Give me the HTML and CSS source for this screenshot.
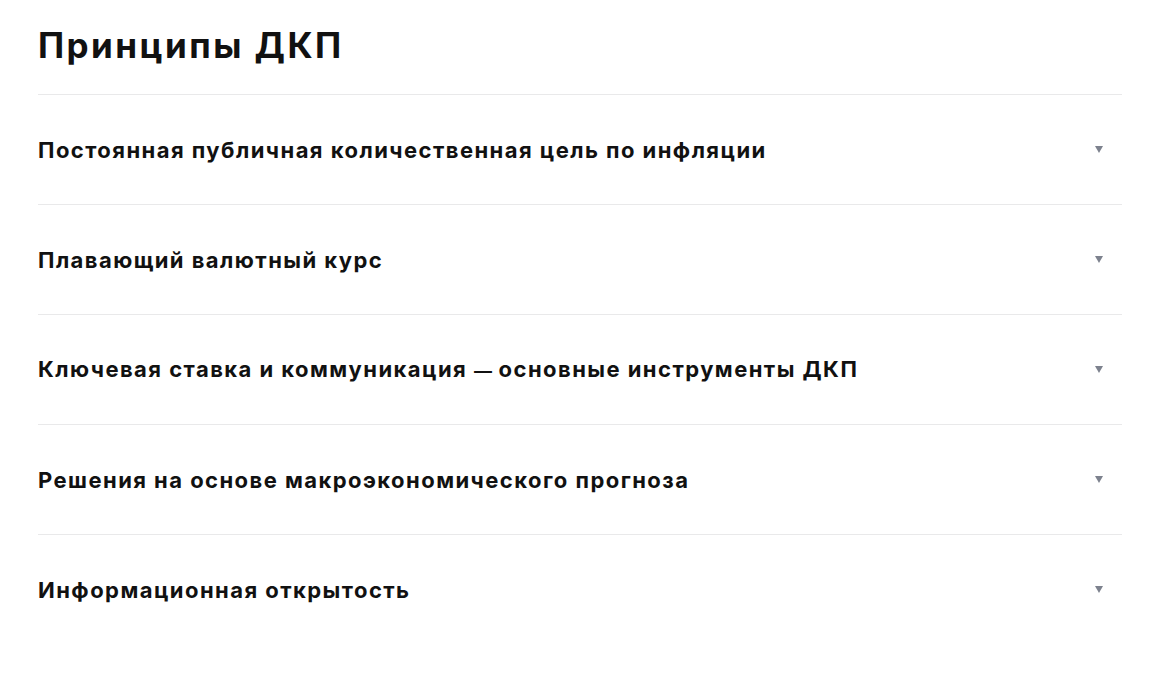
FILE: index.html
```html
<!DOCTYPE html>
<html lang="ru">
<head>
<meta charset="utf-8">
<link rel="stylesheet" href="styles.css">
</head>
<body>
<section class="principles">
  <h1 class="title">Принципы ДКП</h1>
  <div class="list">
    <div class="item"><span class="item-text">Постоянная публичная количественная цель по инфляции</span><span class="arrow"></span></div>
    <div class="item"><span class="item-text">Плавающий валютный курс</span><span class="arrow"></span></div>
    <div class="item"><span class="item-text">Ключевая ставка и коммуникация <span class="dash">—</span> основные инструменты ДКП</span><span class="arrow"></span></div>
    <div class="item"><span class="item-text">Решения на основе макроэкономического прогноза</span><span class="arrow"></span></div>
    <div class="item"><span class="item-text">Информационная открытость</span><span class="arrow"></span></div>
  </div>
</section>
</body>
</html>
```
FILE: styles.css
```css
html, body {
  margin: 0;
  padding: 0;
  background: #ffffff;
}
body {
  font-family: Inter, "Noto Sans", "DejaVu Sans", sans-serif;
  color: #111111;
}
.principles {
  width: 1084px;
  padding: 23px 0 0 38px;
}
.title {
  margin: 0;
  font-size: 35px;
  line-height: 44px;
  font-weight: 700;
  letter-spacing: 2.45px;
}
.list {
  margin-top: 27px;
}
.item {
  display: flex;
  align-items: center;
  justify-content: space-between;
  height: 110px;
  box-sizing: border-box;
  border-top: 1px solid #e9e9ea;
}
.item-text {
  font-size: 22px;
  line-height: 28px;
  font-weight: 700;
  letter-spacing: 1.45px;
}
.dash {
  font-size: 18px;
  letter-spacing: 0;
}
.arrow {
  width: 0;
  height: 0;
  margin-right: 19px;
  margin-bottom: 1px;
  border-left: 4.5px solid transparent;
  border-right: 4.5px solid transparent;
  border-top: 7px solid #7d828e;
}
```
